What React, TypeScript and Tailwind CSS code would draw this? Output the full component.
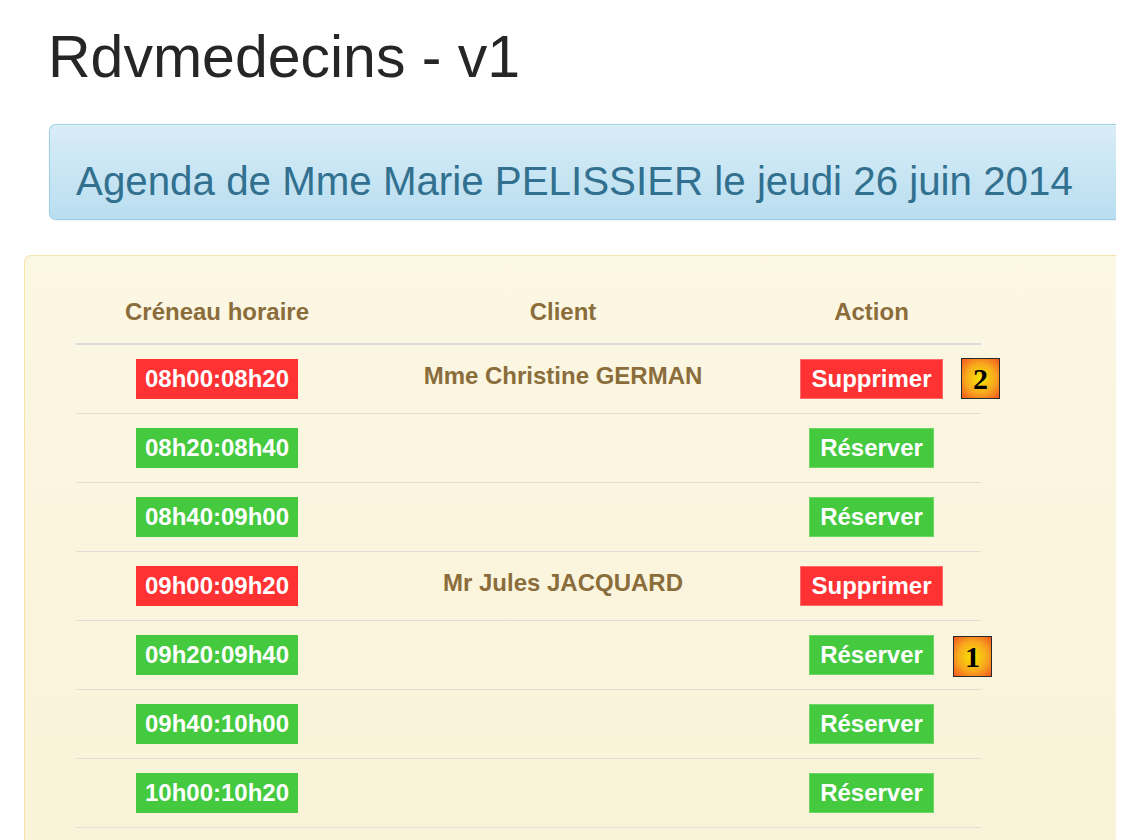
import React from 'react';

interface Slot {
  slot: string;
  client: string;
  booked: boolean;
  mark?: string;
}

const slots: Slot[] = [
  { slot: '08h00:08h20', client: 'Mme Christine GERMAN', booked: true, mark: '2' },
  { slot: '08h20:08h40', client: '', booked: false },
  { slot: '08h40:09h00', client: '', booked: false },
  { slot: '09h00:09h20', client: 'Mr Jules JACQUARD', booked: true },
  { slot: '09h20:09h40', client: '', booked: false, mark: '1' },
  { slot: '09h40:10h00', client: '', booked: false },
  { slot: '10h00:10h20', client: '', booked: false },
];

// numbered marker pasted over the screenshot
const Mark: React.FC<{ n: string; className: string }> = ({ n, className }) => (
  <div
    className={`absolute w-[39px] h-[41px] border border-[#2a2a2a] flex items-center justify-center bg-[radial-gradient(circle,#f6e600_0%,#f8a81e_55%,#f2561f_100%)] font-['Liberation_Serif',serif] font-bold text-[30px] leading-none text-black ${className}`}
  >
    {n}
  </div>
);

const Row: React.FC<{ s: Slot }> = ({ s }) => (
  <div className="relative grid grid-cols-[282px_410px_213px] h-[69px] border-b border-[#e2ded4]">
    <div className="flex items-center justify-center">
      <span
        className={`h-[40px] px-[9px] flex items-center text-white font-bold text-[24px] ${
          s.booked ? 'bg-[#fe3133]' : 'bg-[#44c93f]'
        }`}
      >
        {s.slot}
      </span>
    </div>
    <div className="pt-[14px] text-center leading-[34px] text-[24px] font-bold text-[#8a6d3b]">
      {s.client}
    </div>
    <div className="flex items-center justify-center pr-[6px]">
      {s.booked ? (
        <button className="h-[40px] px-[10px] flex items-center text-white font-bold text-[24px] bg-[#fe3133] border border-[#ff6a6a]">
          Supprimer
        </button>
      ) : (
        <button className="h-[40px] px-[10px] flex items-center text-white font-bold text-[24px] bg-[#44c93f] border border-[#6bd866]">
          Réserver
        </button>
      )}
    </div>
    {s.mark === '2' && <Mark n="2" className="left-[885px] top-[13px]" />}
    {s.mark === '1' && <Mark n="1" className="left-[877px] top-[15px]" />}
  </div>
);

export default function App() {
  return (
    <div className="w-[1116px] h-[840px] overflow-hidden bg-white pt-[25px] font-['Liberation_Sans',Arial,sans-serif]">
      <h1 className="ml-[48px] text-[59px] leading-[65px] text-[#262626]">Rdvmedecins - v1</h1>

      <div className="ml-[49px] mt-[34px] h-[96px] pt-[35px] pl-[26px] border border-r-0 border-[#9acfea] rounded-l-[7px] bg-gradient-to-b from-[#d9edf7] to-[#b9def0] shadow-[inset_0_1px_0_rgba(255,255,255,0.3),0_1px_2px_rgba(0,0,0,0.05)]">
        <h3 className="text-[40.3px] leading-[44px] text-[#31708f]">
          Agenda de Mme Marie PELISSIER le jeudi 26 juin 2014
        </h3>
      </div>

      <div className="ml-[24px] mt-[35px] h-[700px] pt-[25px] pl-[51px] border border-r-0 border-b-0 border-[#f6e4a6] rounded-tl-[7px] bg-gradient-to-b from-[#fcf7e3] to-[#f9f2d7]">
        <div className="w-[905px]">
          <div className="grid grid-cols-[282px_410px_213px] pt-[14px] pb-[14px] leading-[34px] text-[24px] font-bold text-[#8a6d3b] border-b-2 border-[#dcdcdc] text-center">
            <div>Créneau horaire</div>
            <div>Client</div>
            <div className="pr-[6px]">Action</div>
          </div>
          {slots.map((s) => (
            <Row key={s.slot} s={s} />
          ))}
        </div>
      </div>
    </div>
  );
}
